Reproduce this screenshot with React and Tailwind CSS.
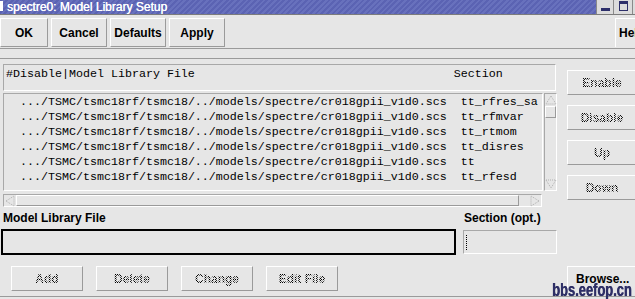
import React from "react";

// spectre0: Model Library Setup — old Motif-ish dialog
const PATH = ".../TSMC/tsmc18rf/tsmc18/../models/spectre/cr018gpii_v1d0.scs";
const ROWS = ["tt_rfres_sa", "tt_rfmvar", "tt_rtmom", "tt_disres", "tt", "tt_rfesd"];

const raised =
  "border border-t-white border-l-white border-b-[#9a9a9a] border-r-[#9a9a9a] bg-[#e6e6e6]";

// stippled "greyed out" label text
const stipple =
  "bg-[repeating-conic-gradient(#000_0%_25%,transparent_0%_50%)] bg-[length:2px_2px] bg-clip-text text-transparent";

function TopButton({ label, w }) {
  return (
    <div
      className={`${raised} ${w} h-[29px] flex items-center justify-center text-[12px] font-bold text-black`}
    >
      {label}
    </div>
  );
}

function DimButton({ label, w = "w-[72px]" }) {
  return (
    <div className={`${raised} ${w} h-[25px] flex items-center justify-center`}>
      <span className={`text-[12px] font-bold ${stipple}`}>{label}</span>
    </div>
  );
}

function Arrow({ dir }) {
  const pts = {
    up: "6,2 11,10 1,10",
    down: "1,2 11,2 6,10",
    left: "2,6 10,1 10,11",
    right: "10,6 2,1 2,11",
  }[dir];
  return (
    <svg width="12" height="12" viewBox="0 0 12 12" className="block">
      <polygon points={pts} fill="none" stroke="#b0b0b0" strokeWidth="1" strokeDasharray="1 1" />
    </svg>
  );
}

export default function App() {
  return (
    <div className="w-[635px] h-[299px] overflow-hidden relative bg-[#e6e6e6] font-['Liberation_Sans',Arial,sans-serif]">
      {/* title bar */}
      <div className="h-[15px] flex border-b border-[#7c7c7c] bg-[repeating-linear-gradient(135deg,#5b63b3_0px,#5b63b3_2px,#6871bd_2px,#6871bd_4px)]">
        <div className="w-[3px] h-[10px] mt-[1px] bg-white" />
        <div className="pl-[4px] text-[12px] leading-[14px] text-white [text-shadow:0.3px_0_0_#fff]">
          spectre0: Model Library Setup
        </div>
        <div className="ml-auto flex">
          <div className="w-[17px] h-[14px] bg-[#dcdcdc] border-l border-[#8a8a8a] flex items-end justify-center pb-[3px]">
            <div className="w-[9px] h-[3px] bg-[#2d2f6a]" />
          </div>
          <div className="w-[19px] h-[14px] bg-[#dcdcdc] border-l border-[#8a8a8a] flex items-start justify-center pt-[1px]">
            <div className="w-[9px] h-[10px] border border-[#2d2f6a] border-t-[3px]" />
          </div>
          <div className="w-[3px] h-[14px] bg-[#dcdcdc] border-l border-[#8a8a8a]" />
        </div>
      </div>

      {/* action buttons */}
      <div className="h-[33px] flex pt-[3px] gap-[3px]">
        <TopButton label="OK" w="w-[48px]" />
        <TopButton label="Cancel" w="w-[56px]" />
        <TopButton label="Defaults" w="w-[56px]" />
        <TopButton label="Apply" w="w-[56px]" />
        <div className="ml-auto w-[20px] h-[29px] border-t border-l border-white flex items-center pl-[3px] text-[12px] font-bold overflow-hidden">
          Help
        </div>
      </div>
      <div className="border-t border-[#9a9a9a] h-[10px]" />
      <div className="border-t border-[#9a9a9a]" />

      <div className="flex">
        {/* left column */}
        <div className="w-[557px] pl-[3px] pt-[5px]">
          <div className="w-[553px] h-[27px] border border-[#a8a8a8] border-b-white border-r-white font-['Liberation_Mono',monospace] text-[11.67px] leading-[15px] pl-[2px] pt-[2px] whitespace-pre text-black">
            {"#Disable|Model Library File" + " ".repeat(37) + "Section"}
          </div>

          <div className="mt-[2px] flex h-[98px]">
            <div className="w-[541px] border border-[#a8a8a8] border-b-white border-r-white overflow-hidden font-['Liberation_Mono',monospace] text-[11.67px] leading-[15px] pt-[1px] pl-[16px] whitespace-pre text-black">
              {ROWS.map((r) => (
                <div key={r}>{PATH + "  " + r}</div>
              ))}
            </div>
            <div className="w-[13px] ml-[1px] border border-[#a8a8a8] border-b-white border-r-white flex flex-col">
              <Arrow dir="up" />
              <div className="h-[12px] border border-t-white border-l-white border-b-[#9a9a9a] border-r-[#9a9a9a]" />
              <div className="flex-1" />
              <Arrow dir="down" />
            </div>
          </div>

          <div className="mt-[3px] w-[539px] h-[13px] border border-[#a8a8a8] border-b-white border-r-white flex">
            <Arrow dir="left" />
            <div className="flex-1 border border-t-white border-l-white border-b-[#9a9a9a] border-r-[#9a9a9a]" />
            <div className="w-[10px]" />
            <Arrow dir="right" />
          </div>

          <div className="flex mt-[3px] text-[12px] font-bold text-black leading-[16px]">
            <div className="w-[461px]">Model Library File</div>
            <div>Section (opt.)</div>
          </div>

          <div className="flex items-start mt-[3px] -ml-[2px]">
            <div className="w-[456px] h-[26px] border-2 border-black" />
            <div className="ml-[7px] mt-[1px] w-[94px] h-[24px] border border-[#a8a8a8] border-b-white border-r-white flex items-center pl-[2px]">
              <div className="w-[2px] h-[15px] border-l border-dotted border-black" />
            </div>
          </div>

          <div className="flex gap-[13px] mt-[11px] pl-[8px]">
            <DimButton label="Add" />
            <DimButton label="Delete" />
            <DimButton label="Change" />
            <DimButton label="Edit File" />
          </div>
        </div>

        {/* right column */}
        <div className="ml-[10px] pt-[11px] flex flex-col">
          <div className="flex flex-col gap-[10px]">
            <DimButton label="Enable" w="w-[70px]" />
            <DimButton label="Disable" w="w-[70px]" />
            <DimButton label="Up" w="w-[70px]" />
            <DimButton label="Down" w="w-[70px]" />
          </div>
          <div className="mt-[66px] w-[70px] h-[25px] border-t border-l border-white flex items-center pl-[8px] text-[12px] font-bold text-black">
            Browse...
          </div>
        </div>
      </div>

      <div className="absolute left-0 right-0 top-[296px] border-t border-[#9a9a9a]" />

      {/* forum watermark */}
      <div className="absolute left-[552px] top-[280px] text-[19px] leading-[20px] font-bold text-[#2e2f66] [text-shadow:0.6px_0_0_#2e2f66] scale-x-[0.68] origin-left whitespace-nowrap">
        bbs.eefop.cn
      </div>
    </div>
  );
}
